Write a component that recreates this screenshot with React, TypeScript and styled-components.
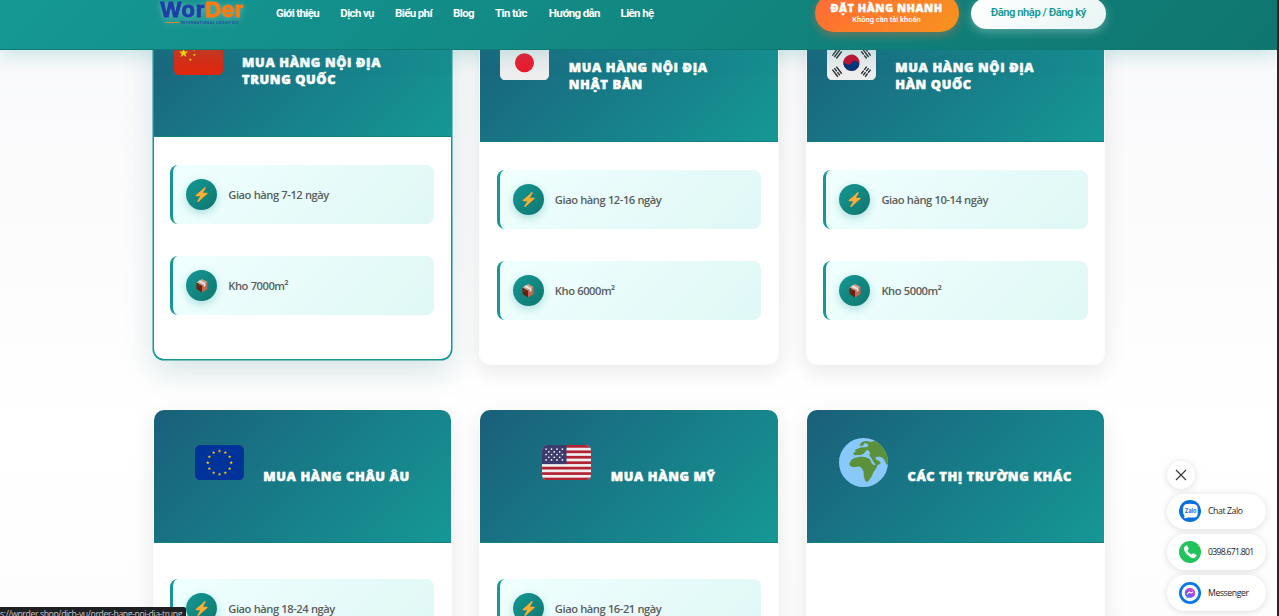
import React from 'react';
import styled, { createGlobalStyle } from 'styled-components';

const Global = createGlobalStyle`
  * { box-sizing: border-box; }
  html, body { margin: 0; padding: 0; overflow: hidden; }
`;

const ui = `'Open Sans', 'Noto Sans', sans-serif`;

const Page = styled.div`
  width: 100%;
  height: 616px;
  display: flex;
  flex-direction: column;
  overflow: hidden;
  border-right: 2px solid #25292c;
  background: linear-gradient(180deg, #f8f9fb 0%, #fbfbfc 35%, #ffffff 70%, #fdfdfd 100%);
  font-family: ${ui};
`;

const Header = styled.header`
  position: relative;
  z-index: 2;
  flex: none;
  height: 50px;
  padding: 0 171.500px 23px 159.500px;
  display: flex;
  align-items: center;
  background: linear-gradient(135deg, #159895 0%, #0f766e 100%);
  border-bottom: 1.5px solid #0f7a70;
  box-shadow: 0 5px 20px rgba(21, 152, 149, 0.22);
  font-family: Roboto, sans-serif;
`;

const Logo = styled.div`
  width: 85px;
  margin-top: -2px;
  display: flex;
  flex-direction: column;
  filter: drop-shadow(0 1px 3px rgba(255, 255, 255, 0.35));
`;

const LogoWord = styled.div`
  padding-left: 1px;
  font: 700 22px/19px 'Liberation Sans', sans-serif;
  letter-spacing: 0.75px;
  -webkit-text-stroke: 0.9px currentColor;
  white-space: nowrap;
  color: #1d3fa6;
  span { color: #ff7a0f; }
`;

const LogoTag = styled.div`
  margin: 2px 0 0 5.5px;
  display: flex;
  align-items: center;
  gap: 2px;
  color: #1d4f9c;
  font: 700 3.6px/4px Inter, sans-serif;
  letter-spacing: 0.36px;
  white-space: nowrap;
  &::before {
    content: '';
    width: 14px;
    height: 1px;
    background: #d98a2b;
  }
`;

const Nav = styled.nav`
  margin-left: 31.5px;
  display: flex;
  gap: 21.3px;
`;

const NavLink = styled.a<{ $w: number }>`
  width: ${p => p.$w}px;
  color: #fff;
  font-size: 11.5px;
  line-height: 16px;
  font-weight: 700;
  letter-spacing: -0.64px;
  white-space: nowrap;
`;

const Actions = styled.div`
  margin-left: auto;
  display: flex;
  align-items: center;
  gap: 12.5px;
  flex: none;
`;

const OrderButton = styled.button`
  width: 144px;
  height: 38px;
  margin-top: -1px;
  padding: 2px 0 0;
  border: 0;
  border-radius: 19px;
  display: flex;
  flex-direction: column;
  align-items: center;
  justify-content: center;
  background: linear-gradient(135deg, #ff6b35, #f7931e);
  box-shadow: 0 3px 10px rgba(255, 107, 53, 0.4);
  color: #fff;
  font: 800 11px/12px ${ui};
  letter-spacing: 0.5px;
  -webkit-text-stroke: 0.4px currentColor;
  white-space: nowrap;
`;

const OrderNote = styled.span`
  font: 500 7.5px/11px Roboto, sans-serif;
  letter-spacing: 0;
  -webkit-text-stroke: 0;
`;

const LoginButton = styled.button`
  width: 134.5px;
  height: 31px;
  padding: 0;
  border: 0;
  border-radius: 16px;
  background: linear-gradient(135deg, #ffffff, #e8f5f4);
  box-shadow: 0 3px 10px rgba(255, 255, 255, 0.3);
  color: #159895;
  font: 600 11.2px/16px Roboto, sans-serif;
  letter-spacing: -0.46px;
  white-space: nowrap;
`;

const Main = styled.main`
  flex: 1;
  min-height: 0;
  overflow: hidden;
`;

const Grid = styled.div`
  margin: -42px 0 0 152.6px;
  display: grid;
  grid-template-columns: repeat(3, 299.4px);
  grid-auto-rows: 357px;
  gap: 44px 27.2px;
`;

const Card = styled.article<{ $active?: boolean }>`
  border: 1px solid ${p => (p.$active ? '#159895' : 'rgba(255,255,255,0.8)')};
  border-radius: 11px;
  overflow: hidden;
  background: #fff;
  background-clip: padding-box;
  transform: ${p => (p.$active ? 'translateY(-5px)' : 'none')};
  box-shadow: ${p => (p.$active ? '0 0 0 0.5px #159895, 0 13px 30px rgba(21,98,102,0.16)' : '0 7px 22px rgba(0,0,0,0.085)')};
`;

const CardHead = styled.div<{ $center?: boolean }>`
  height: 133px;
  padding: ${p => (p.$center ? '0 20px 1.5px' : '0 20px')};
  display: flex;
  align-items: center;
  justify-content: ${p => (p.$center ? 'center' : 'flex-start')};
  gap: 19.5px;
  background: linear-gradient(135deg, #1a5f7a 0%, #159895 100%);
  border-bottom: 1px solid #128087;
`;

const Emblem = styled.div`
  flex: none;
  width: 49px;
  height: 49px;
  margin-bottom: 25px;
  display: flex;
  align-items: center;
  svg { display: block; width: 100%; }
`;

const Title = styled.h3`
  margin: 2px 0 0;
  color: #fff;
  font: 800 12.8px/17px ${ui};
  letter-spacing: 0.62px;
  -webkit-text-stroke: 0.5px currentColor;
  white-space: pre;
`;

const CardBody = styled.div<{ $top: number }>`
  padding: ${p => p.$top}px 16.5px 0;
  display: flex;
  flex-direction: column;
  gap: 32.7px;
`;

const Feature = styled.div`
  height: 59px;
  padding-left: 13.2px;
  display: flex;
  align-items: center;
  gap: 11px;
  border-left: 3px solid #159895;
  border-radius: 8px;
  background: linear-gradient(135deg, #f0ffff 0%, #dff8f5 100%);
  color: #5a5e5e;
  font-size: 11.2px;
  font-weight: 600;
  letter-spacing: -0.48px;
  word-spacing: 0.3px;
  white-space: nowrap;
`;

const Disc = styled.span`
  width: 31px;
  height: 31px;
  border-radius: 50%;
  display: grid;
  place-items: center;
  background: linear-gradient(135deg, #159895, #0f766e);
  box-shadow: 0 3px 8px rgba(21, 152, 149, 0.3);
`;

const Contact = styled.aside`
  position: absolute;
  z-index: 3;
  left: 1167px;
  top: 461px;
  display: flex;
  flex-direction: column;
`;

const CloseButton = styled.button`
  width: 28px;
  height: 28px;
  margin-bottom: 4.5px;
  padding: 0;
  border: 0;
  border-radius: 50%;
  display: grid;
  place-items: center;
  background: #fff;
  box-shadow: 0 1px 7px rgba(0, 0, 0, 0.13);
`;

const Pill = styled.a<{ $tracking?: number }>`
  width: 99px;
  height: 35.5px;
  margin-bottom: 5.3px;
  padding-left: 12.2px;
  border-radius: 18px;
  display: flex;
  align-items: center;
  gap: 6.8px;
  background: #fff;
  box-shadow: 0 1px 7px rgba(0, 0, 0, 0.13);
  color: #222;
  font: 500 8.7px/12px ${ui};
  letter-spacing: ${p => p.$tracking ?? -0.4}px;
  white-space: nowrap;
`;

const StatusBar = styled.div`
  position: absolute;
  z-index: 4;
  left: 0;
  bottom: 0;
  width: 186px;
  height: 9px;
  padding-right: 4px;
  display: flex;
  justify-content: flex-end;
  overflow: hidden;
  border-top-right-radius: 2px;
  background: #1f2022;
  color: #c9cbce;
  font: 400 8.7px/14px ${ui};
  letter-spacing: -0.4px;
  white-space: nowrap;
`;

const starPoints = (cx: number, cy: number, r: number, rot = 0) =>
  Array.from({ length: 10 }, (_, i) => {
    const a = ((i * 36 - 90 + rot) * Math.PI) / 180;
    const k = i % 2 ? r * 0.4 : r;
    return `${(cx + k * Math.cos(a)).toFixed(2)},${(cy + k * Math.sin(a)).toFixed(2)}`;
  }).join(' ');

const China = () => (
  <svg viewBox="0 0 36 26">
    <rect width="36" height="26" rx="4" fill="#de2910" />
    <polygon points={starPoints(7, 9.600, 3.6)} fill="#ffde02" />
    {[[12, 4.2], [15, 7], [15, 11], [12, 14.5]].map(([x, y]) => (
      <polygon key={y} points={starPoints(x, y, 1.2, 20)} fill="#ffde02" />
    ))}
  </svg>
);

const Japan = () => (
  <svg viewBox="0 0 36 26">
    <rect width="36" height="26" rx="4" fill="#eee" />
    <circle cx="18" cy="13" r="7" fill="#ed1b2f" />
  </svg>
);

const Trigram = ({ x, y, r, broken }: { x: number; y: number; r: number; broken: number[] }) => (
  <g transform={`translate(${x} ${y}) rotate(${r})`} stroke="#292f33" strokeWidth="1">
    {[-1.8, 0, 1.8].map((o, i) =>
      broken.includes(i) ? (
        <path key={i} d={`M-3.3 ${o}H-0.35M0.35 ${o}H3.3`} />
      ) : (
        <path key={i} d={`M-3.3 ${o}H3.3`} />
      )
    )}
  </g>
);

const Korea = () => (
  <svg viewBox="0 0 36 26">
    <rect width="36" height="26" rx="4" fill="#eee" />
    <g transform="rotate(33.7 18 13)">
      <circle cx="18" cy="13" r="6" fill="#c60c30" />
      <path d="M12 13a3 3 0 0 0 6 0a3 3 0 0 1 6 0a6 6 0 0 1 -12 0z" fill="#003478" />
    </g>
    <Trigram x={7.4} y={6.2} r={-53} broken={[]} />
    <Trigram x={28.6} y={6.2} r={53} broken={[0, 2]} />
    <Trigram x={7.4} y={19.6} r={53} broken={[1]} />
    <Trigram x={28.6} y={19.6} r={-53} broken={[0, 1, 2]} />
  </svg>
);

const Europe = () => (
  <svg viewBox="0 0 36 26">
    <rect width="36" height="26" rx="4" fill="#039" />
    {Array.from({ length: 12 }, (_, i) => {
      const a = (i * Math.PI) / 6;
      return (
        <polygon
          key={i}
          points={starPoints(18 + 8.6 * Math.sin(a), 13 - 8.6 * Math.cos(a), 1.35)}
          fill="#ffcc00"
        />
      );
    })}
  </svg>
);

const America = () => (
  <svg viewBox="0 0 36 26">
    <clipPath id="us-flag">
      <rect width="36" height="26" rx="4" />
    </clipPath>
    <g clipPath="url(#us-flag)">
      <rect width="36" height="26" fill="#eee" />
      {[0, 4, 8, 12, 16, 20, 24].map(y => (
        <rect key={y} y={y} width="36" height="2" fill="#b22334" />
      ))}
      <rect width="18" height="14" fill="#3c3b6e" />
      {[3, 5, 7, 9, 11].flatMap((y, r) =>
        (r % 2 ? [5, 9, 13] : [3, 7, 11, 15]).map(x => (
          <circle key={`${x}-${y}`} cx={x} cy={y} r="0.62" fill="#fff" />
        ))
      )}
    </g>
  </svg>
);

const Globe = () => (
  <svg viewBox="0 0 36 36">
    <clipPath id="globe">
      <circle cx="18" cy="18" r="18" />
    </clipPath>
    <circle cx="18" cy="18" r="18" fill="#88c9f9" />
    <g clipPath="url(#globe)" fill="#5c913b">
      <path d="M15.5 5C15.7 3.3 17.5 2.2 20.4 2.2c1.800.2 2.600.9 4.100.3c1.500-.5 3-.8 4.500 0L37 10v9.500h-2.200c-.6-2.200-1.400-3.500-2.600-4.700c-1.200-1-2.800-1.300-4.400-1c-1 .3-1.300 1.200-.5 2c1.300.6 2.700 1 3.200 2.100c.3 1-1.600 2.100-3.600 1.900c-1.200-1-1.900-2.500-3-4l-.5-1.900c-1-.2-1.500-1.700-.3-2.900c-.8-.8-1.200-1.400-1.500-2.200c-1.500-.2-2.100 1-2.700 1.800c-1.400 1.700-3 1.900-4.900 1.800l-2.300.2c-1-.3-1.600-1-1.100-1.600c1.500-.5 1.800-1.400 1.300-2.600c1.500-.1 2.700-1.300 4.200-1.500c2.500-.2 4.700.4 5.500-1.400c.2-1.200-1.300-1.800-3-1.700c-.8.7-.3 1.400-1.200 1.800c-1 .4-2.400.2-2.400-.6z" />
      <path d="M7.800 18.600c.8-2.800 3.300-4.300 6.200-4.500c2.500-.5 4.600-.4 7 .6c1.500.3 1.900 1 2.300 2c.6 1.700 1.500 3.200 2.700 3.300c1.200.1 2-.5 2.100.1c-.1 2.100-1.900 3.600-2.900 5.100c-.6 1.500-.8 2.900-2.100 4.300c-.8 1.500-1.800 2.800-3.100 2.600c-1.300-1-1.400-3.200-1.900-5c.2-2.200-.1-3.600-1.200-4.400c-.6-1.400-1.900-2.100-3.600-1.500c-2 .3-4 .3-5.200-.8c-.5-.5-.5-1.100-.3-1.800z" />
    </g>
    <path d="M23.600 15.300c.7 1.100 1.200 2.800 2.400 3.800" stroke="#88c9f9" strokeWidth="0.900" fill="none" />
  </svg>
);

const Bolt = () => (
  <svg width="15" height="15" viewBox="0 0 36 36">
    <path
      fill="#ffac33"
      d="M32.500 15c-.2-.6-.8-1-1.500-1H21.500L27.800 2.300c.4-.7.200-1.500-.4-2c-.6-.5-1.500-.5-2.100 0L18 7.500L4.500 19.300c-.5.400-.7 1.100-.4 1.700c.2.600.8 1 1.400 1h9.500L8.200 33.700c-.4.700-.2 1.500.4 2c.6.400 1.500.400 2.100 0L18 28.500l14-11.800c.5-.4.700-1.100.5-1.700z"
    />
  </svg>
);

const Parcel = () => (
  <svg width="14" height="15" viewBox="0 0 28 30">
    <path d="M3 9L14 15V29L3 22z" fill="#662113" />
    <path d="M14 15L25 8V22L14 29z" fill="#c1694f" />
    <path d="M3 9L14 2L25 8L14 15z" fill="#d99e82" />
    <path d="M6 7L10 4.500L21 11V16L17.500 18V13z" fill="#e1e8ed" />
    <path d="M7 11.200L9 12.300V17L7 16z" fill="#993c25" />
  </svg>
);

const Zalo = () => (
  <svg width="22" height="22" viewBox="0 0 22 22">
    <circle cx="11" cy="11" r="11" fill="#0870dd" />
    <path d="M6.500 4.200Q11 3.300 15.500 4.200Q18.600 5 18.700 8V14Q18.500 17.200 15.500 17.500H9Q6.500 18.700 4.800 17.800L5.700 16.300Q4 14.500 4 11Q3.700 5.200 6.500 4.200z" fill="#fff" />
    <text x="11.600" y="13" textAnchor="middle" fontFamily="Inter, sans-serif" fontWeight="700" fontSize="5.500" letterSpacing="0" fill="#1673e5">Zalo</text>
  </svg>
);

const Phone = () => (
  <svg width="22" height="22" viewBox="0 0 22 22">
    <circle cx="11" cy="11" r="11" fill="#20c45b" />
    <path d="M5.200 6.300L7 4.500Q7.800 4 8.300 4.800L9.600 7.200Q9.900 8 9.300 8.600L8.400 9.500Q9.700 12.200 12.500 13.600L13.400 12.700Q14 12.100 14.800 12.500L17.200 13.800Q18 14.300 17.500 15L15.800 16.800Q14.500 17.900 11.500 16.300Q7 13.700 5.200 9.500Q4.500 7.300 5.200 6.300z" fill="#fff" />
  </svg>
);

const Messenger = () => (
  <svg width="22" height="22" viewBox="0 0 22 22">
    <defs>
      <linearGradient id="msg" x1="0" y1="1" x2="1" y2="0">
        <stop offset="0" stopColor="#1689ff" />
        <stop offset="0.500" stopColor="#9a44f5" />
        <stop offset="1" stopColor="#ff6080" />
      </linearGradient>
    </defs>
    <circle cx="11" cy="11" r="11" fill="#0877e8" />
    <circle cx="11" cy="11" r="8.300" fill="#fff" />
    <path d="M11 6c3 0 5.200 2.100 5.200 4.900s-2.200 4.900-5.200 4.900l-1.500-.2L7.600 16.400V14.700C6.500 13.800 5.800 12.500 5.800 10.900C5.800 8.100 8 6 11 6z" fill="url(#msg)" />
    <path d="M8 12.300L10.200 9.900L11.900 11.200L14 9.900" stroke="#fff" strokeWidth="1.100" fill="none" />
  </svg>
);

const nav: [string, number][] = [
  ['Giới thiệu', 43], ['Dịch vụ', 33.5], ['Biểu phí', 36.7], ['Blog', 20.7],
  ['Tin tức', 32.5], ['Hướng dẫn', 50.4], ['Liên hệ', 34],
];

const markets = [
  { title: 'MUA HÀNG NỘI ĐỊA\nTRUNG QUỐC', Flag: China, days: '7-12', area: '7000', active: true },
  { title: 'MUA HÀNG NỘI ĐỊA\nNHẬT BẢN', Flag: Japan, days: '12-16', area: '6000' },
  { title: 'MUA HÀNG NỘI ĐỊA\nHÀN QUỐC', Flag: Korea, days: '10-14', area: '5000' },
  { title: 'MUA HÀNG CHÂU ÂU', Flag: Europe, days: '18-24' },
  { title: 'MUA HÀNG MỸ', Flag: America, days: '16-21' },
  { title: 'CÁC THỊ TRƯỜNG KHÁC', Flag: Globe },
];

export default function App() {
  return (
    <>
      <Global />
      <Page>
        <Header>
          <Logo>
            <LogoWord>Wor<span>Der</span></LogoWord>
            <LogoTag>INTERNATIONAL LOGISTICS</LogoTag>
          </Logo>
          <Nav>
            {nav.map(([label, w]) => <NavLink key={label} $w={w}>{label}</NavLink>)}
          </Nav>
          <Actions>
            <OrderButton>
              ĐẶT HÀNG NHANH
              <OrderNote>Không cần tài khoản</OrderNote>
            </OrderButton>
            <LoginButton>Đăng nhập / Đăng ký</LoginButton>
          </Actions>
        </Header>
        <Main>
          <Grid>
            {markets.map(({ title, Flag, days, area, active }, i) => (
              <Card key={title} $active={active}>
                <CardHead $center={i > 2}>
                  <Emblem><Flag /></Emblem>
                  <Title>{title}</Title>
                </CardHead>
                <CardBody $top={i > 2 ? 36 : 27.5}>
                  {days && <Feature><Disc><Bolt /></Disc>Giao hàng {days} ngày</Feature>}
                  {area && <Feature><Disc><Parcel /></Disc>Kho {area}m²</Feature>}
                </CardBody>
              </Card>
            ))}
          </Grid>
        </Main>
      </Page>
      <Contact>
        <CloseButton aria-label="Đóng">
          <svg width="12" height="12" viewBox="0 0 12 12">
            <path d="M1 1L11 11M11 1L1 11" stroke="#333" strokeWidth="1.1" />
          </svg>
        </CloseButton>
        <Pill><Zalo />Chat Zalo</Pill>
        <Pill $tracking={-0.72}><Phone />0398.671.801</Pill>
        <Pill><Messenger />Messenger</Pill>
      </Contact>
      <StatusBar>https://worder.shop/dich-vu/order-hang-noi-dia-trung</StatusBar>
    </>
  );
}
